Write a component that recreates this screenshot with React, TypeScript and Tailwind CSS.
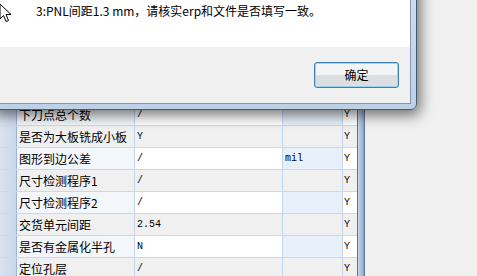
const ROWS: { name: string; value: string; unit: string; flag: string }[] = [
  { name: '下刀点总个数', value: '/', unit: '', flag: 'Y' },
  { name: '是否为大板铣成小板', value: 'Y', unit: '', flag: 'Y' },
  { name: '图形到边公差', value: '/', unit: 'mil', flag: 'Y' },
  { name: '尺寸检测程序1', value: '/', unit: '', flag: 'Y' },
  { name: '尺寸检测程序2', value: '/', unit: '', flag: 'Y' },
  { name: '交货单元间距', value: '2.54', unit: '', flag: 'Y' },
  { name: '是否有金属化半孔', value: 'N', unit: '', flag: 'Y' },
  { name: '定位孔层', value: '/', unit: '', flag: 'Y' },
];

const CJK = "font-['Noto_Sans_CJK_SC','Microsoft_YaHei',sans-serif]";
const MONO = "font-['Liberation_Mono','Courier_New',monospace]";

function Cursor() {
  return (
    <svg className="absolute left-[-1px] top-[3px] z-20" width="13" height="20" viewBox="0 0 13 20">
      <path d="M1 1 L1 16 L4.5 12.5 L7 18.5 L9.5 17.5 L7 11.5 L12 11.5 Z" fill="#fff" stroke="#000" strokeWidth="1" strokeLinejoin="miter" />
    </svg>
  );
}

export default function App() {
  return (
    <div className="relative w-[477px] h-[276px] overflow-hidden bg-[#f0f0f0]">
      {/* Property grid behind the message box */}
      <div className="flex pt-[104px]">
        <div className="w-[357px] flex flex-col">
          {ROWS.map((r, i) => {
            const light = i % 2 === 0;
            return (
              <div key={r.name} className="flex h-[22px] border-b border-[#c9d8ee]">
                <div className="w-[17px] border-r border-[#9db4d4] bg-gradient-to-r from-[#d9e3f1] to-[#c9d7ea]" />
                <div className={`w-[118px] border-r border-[#c3d4ee] pl-[2px] flex items-center text-[12px] text-black ${CJK} ${light ? 'bg-[#f3f6fb]' : 'bg-[#f0f0f0]'}`}>
                  {r.name}
                </div>
                <div className={`w-[148px] border-r border-[#c3d4ee] pl-[2px] flex items-center text-[10px] text-black ${MONO} ${light ? 'bg-white' : 'bg-[#f0f0f0]'}`}>
                  {r.value}
                </div>
                <div className={`w-[60px] border-r border-[#c3d4ee] pl-[2px] flex items-center text-[10px] text-black ${MONO} ${light ? 'bg-[#e8f0fb]' : 'bg-[#f0f0f0]'}`}>
                  {r.unit}
                </div>
                <div className={`w-[14px] pl-[1px] flex items-center text-[10px] text-black ${MONO} ${light ? 'bg-white' : 'bg-[#f0f0f0]'}`}>
                  {r.flag}
                </div>
              </div>
            );
          })}
        </div>
        <div className="w-[8px] h-[200px] border-x border-[#5d7395] bg-gradient-to-r from-[#c5d4e8] via-[#aebfd7] to-[#8ea4c4]" />
      </div>

      {/* Message box window */}
      <div className="absolute left-[-10px] top-[-40px] w-[427px] h-[150px] rounded-br-[6px] border border-[#4a5a70] bg-gradient-to-b from-[#cfe0f2] to-[#bcd1e8] pl-[8px] pt-[30px] pr-[5px] pb-[5px] shadow-[3px_5px_14px_rgba(0,0,0,0.55)] z-10">
        <div className="border border-[#8497b0] flex flex-col">
          <div className="h-[55px] bg-white pl-[36px] pt-[11px]">
            <p className={`text-[12px] leading-[16px] text-black ${CJK}`}>3:PNL间距1.3 mm，请核实erp和文件是否填写一致。</p>
          </div>
          <div className="h-[56px] bg-[#f0f0f0] flex justify-end items-start pt-[15px] pr-[11px]">
            <button className={`w-[85px] h-[26px] rounded-[3px] border border-[#3c7fb1] bg-gradient-to-b from-[#f3f4f5] from-50% to-[#dcdfe2] to-50% shadow-[inset_0_0_0_1px_#9ad6f2] text-[12px] text-black ${CJK}`}>
              确定
            </button>
          </div>
        </div>
      </div>

      <Cursor />
    </div>
  );
}
